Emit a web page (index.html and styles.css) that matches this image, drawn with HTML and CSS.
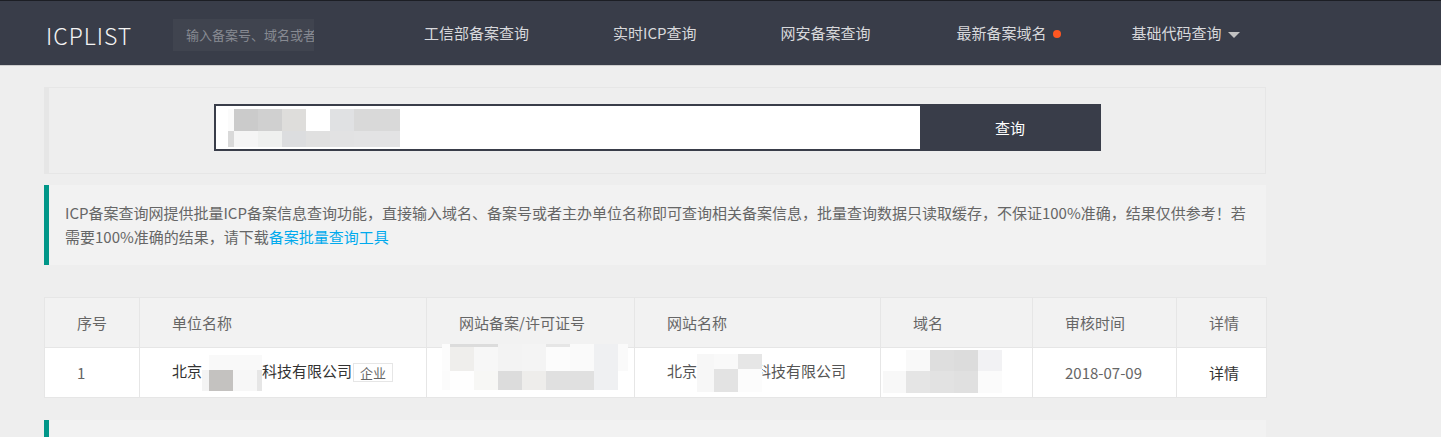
FILE: index.html
```html
<!DOCTYPE html>
<html lang="zh-CN">

<head>
    <meta charset="UTF-8">
    <meta name="viewport" content="width=device-width, initial-scale=1.0">
    <title>ICPLIST - ICP备案查询</title>
    <link rel="stylesheet" href="styles.css">
</head>

<body>
    <!-- Header -->
    <div class="header">
        <a class="logo" href="/">ICPLIST</a>
        <input class="header-search" type="text" placeholder="输入备案号、域名或者主办单位名称">
        <ul class="nav">
            <li class="nav-item"><a href="#">工信部备案查询</a></li>
            <li class="nav-item"><a href="#">实时ICP查询</a></li>
            <li class="nav-item"><a href="#">网安备案查询</a></li>
            <li class="nav-item"><a href="#">最新备案域名<span class="badge-dot"></span></a></li>
            <li class="nav-item"><a href="#">基础代码查询<span class="nav-more"></span></a></li>
        </ul>
    </div>

    <div class="container">
        <!-- Search -->
        <div class="search-panel">
            <form class="search-form" action="#" method="GET">
                <div class="search-field">
                    <svg class="mosaic" width="172" height="38" viewBox="0 0 172 38" shape-rendering="crispEdges">
                        <rect x="0" y="0" width="6" height="22" fill="#fbfbfb" />
                        <rect x="6" y="0" width="24" height="22" fill="#cbcbcb" />
                        <rect x="30" y="0" width="24" height="22" fill="#d0d0d0" />
                        <rect x="54" y="0" width="24" height="22" fill="#dedddb" />
                        <rect x="102" y="0" width="24" height="22" fill="#e0e1e3" />
                        <rect x="126" y="0" width="46" height="22" fill="#d9d9d9" />
                        <rect x="0" y="22" width="6" height="16" fill="#d9d9d9" />
                        <rect x="6" y="22" width="24" height="16" fill="#f5f5f5" />
                        <rect x="30" y="22" width="24" height="16" fill="#eff0ef" />
                        <rect x="54" y="22" width="24" height="16" fill="#dcdddf" />
                        <rect x="78" y="22" width="24" height="16" fill="#e0e0e0" />
                        <rect x="102" y="22" width="24" height="16" fill="#e2e2e3" />
                        <rect x="126" y="22" width="46" height="16" fill="#e3e3e4" />
                    </svg>
                </div>
                <button class="search-button" type="submit">查询</button>
            </form>
        </div>

        <!-- Notice -->
        <div class="quote">
            ICP备案查询网提供批量ICP备案信息查询功能，直接输入域名、备案号或者主办单位名称即可查询相关备案信息，批量查询数据只读取缓存，不保证100%准确，结果仅供参考！若<br>需要100%准确的结果，请下载<a href="#">备案批量查询工具</a>
        </div>

        <!-- Result table -->
        <table class="result-table">
            <colgroup>
                <col class="col-no">
                <col class="col-unit">
                <col class="col-license">
                <col class="col-site">
                <col class="col-domain">
                <col class="col-time">
                <col class="col-detail">
            </colgroup>
            <thead>
                <tr>
                    <th>序号</th>
                    <th>单位名称</th>
                    <th>网站备案/许可证号</th>
                    <th>网站名称</th>
                    <th>域名</th>
                    <th>审核时间</th>
                    <th>详情</th>
                </tr>
            </thead>
            <tbody>
                <tr>
                    <td>1</td>
                    <td class="unit-name">北京<svg class="mosaic" width="60" height="36" viewBox="0 0 60 36" shape-rendering="crispEdges">
                            <rect x="7" y="0" width="53" height="15" fill="#f9f9f9" />
                            <rect x="0" y="15" width="7" height="21" fill="#f4f4f4" />
                            <rect x="7" y="15" width="24" height="21" fill="#c4c2c0" />
                            <rect x="31" y="15" width="24" height="21" fill="#f7f7f7" />
                            <rect x="55" y="15" width="5" height="21" fill="#e6e6e6" />
                        </svg>科技有限公司<span class="tag">企业</span></td>
                    <td class="cell-cover">
                        <svg class="mosaic mosaic-license" width="186" height="46" viewBox="0 0 186 46" shape-rendering="crispEdges">
                            <rect x="0" y="0" width="8" height="27" fill="#fcfcfc" />
                            <rect x="8" y="0" width="24" height="27" fill="#efeeec" />
                            <rect x="32" y="0" width="24" height="27" fill="#f7f7f7" />
                            <rect x="56" y="0" width="24" height="27" fill="#f3f3f3" />
                            <rect x="80" y="0" width="24" height="27" fill="#f4f4f4" />
                            <rect x="104" y="0" width="24" height="27" fill="#fcfcfc" />
                            <rect x="128" y="0" width="24" height="27" fill="#fafafa" />
                            <rect x="152" y="0" width="24" height="27" fill="#eff0f2" />
                            <rect x="176" y="0" width="10" height="27" fill="#fafafa" />
                            <rect x="8" y="0" width="48" height="3" fill="#dcdcdc" />
                            <rect x="104" y="0" width="24" height="3" fill="#e6e6e6" />
                            <rect x="0" y="27" width="8" height="19" fill="#fbfbfb" />
                            <rect x="8" y="27" width="24" height="19" fill="#fefefe" />
                            <rect x="32" y="27" width="24" height="19" fill="#f7f7f5" />
                            <rect x="56" y="27" width="24" height="19" fill="#dcdcdc" />
                            <rect x="80" y="27" width="24" height="19" fill="#eeedeb" />
                            <rect x="104" y="27" width="48" height="19" fill="#e0e0e0" />
                            <rect x="152" y="27" width="24" height="19" fill="#eff0f2" />
                        </svg>
                    </td>
                    <td class="site-name">北京<svg class="mosaic mosaic-site" width="65" height="38" viewBox="0 0 65 38" shape-rendering="crispEdges">
                            <rect x="0" y="0" width="17" height="15" fill="#f7f7f7" />
                            <rect x="17" y="0" width="24" height="15" fill="#f9f9f9" />
                            <rect x="41" y="0" width="24" height="15" fill="#e6e6e6" />
                            <rect x="0" y="15" width="17" height="23" fill="#f7f7f7" />
                            <rect x="17" y="15" width="24" height="23" fill="#e3e3e3" />
                            <rect x="41" y="15" width="24" height="23" fill="#fcfcfc" />
                        </svg>科技有限公司</td>
                    <td class="cell-cover">
                        <svg class="mosaic mosaic-domain" width="119" height="43" viewBox="0 0 119 43" shape-rendering="crispEdges">
                            <rect x="23" y="0" width="24" height="21" fill="#f9f9f9" />
                            <rect x="47" y="0" width="24" height="21" fill="#dedede" />
                            <rect x="71" y="0" width="24" height="21" fill="#dcdcdc" />
                            <rect x="95" y="0" width="24" height="21" fill="#f2f2f4" />
                            <rect x="0" y="21" width="23" height="22" fill="#f8f8f8" />
                            <rect x="23" y="21" width="24" height="22" fill="#e5e5e5" />
                            <rect x="47" y="21" width="24" height="22" fill="#e2e2e2" />
                            <rect x="71" y="21" width="24" height="22" fill="#e0e0e0" />
                            <rect x="95" y="21" width="24" height="22" fill="#fbfbfb" />
                        </svg>
                    </td>
                    <td>2018-07-09</td>
                    <td><a class="detail-link" href="#">详情</a></td>
                </tr>
            </tbody>
        </table>

        <div class="quote quote-empty"></div>
    </div>
</body>

</html>
```

FILE: styles.css
```css
/* General Reset */
* {
    margin: 0;
    padding: 0;
    box-sizing: border-box;
}

body {
    font-family: "Noto Sans CJK SC", "Noto Sans", sans-serif;
    font-size: 15px;
    background-color: #eeeeee;
    color: #333;
    overflow: hidden;
}

a {
    text-decoration: none;
}

/* Header */
.header {
    display: flex;
    align-items: center;
    height: 66px;
    padding-left: 46px;
    background-color: #393d49;
    border-top: 1px solid #1c1e24;
    border-bottom: 1px solid #cdcdcd;
}

.logo {
    width: 127px;
    font-size: 23px;
    font-weight: 300;
    letter-spacing: 1px;
    color: #f4f4f4;
    padding-top: 3px;
}

.header-search {
    width: 141px;
    height: 32px;
    margin-top: 3px;
    padding-left: 13px;
    border: none;
    outline: none;
    background-color: #40444f;
    font-family: "Noto Sans CJK SC", sans-serif;
    font-size: 13px;
    color: #ccc;
}

.header-search::placeholder {
    color: #878a92;
}

.nav {
    display: flex;
    list-style: none;
    margin-left: 68px;
}

.nav-item a {
    position: relative;
    display: block;
    padding: 0 42px;
    line-height: 62px;
    color: #d8d9dc;
    font-size: 15px;
}

.nav-item:nth-child(4) a {
    padding: 0 43px 0 44px;
}

.badge-dot {
    position: absolute;
    top: 50%;
    width: 8px;
    height: 8px;
    margin: -3px 0 0 6px;
    border-radius: 50%;
    background-color: #ff5722;
}

.nav-more {
    position: absolute;
    top: 50%;
    width: 0;
    height: 0;
    margin: -1px 0 0 6px;
    border: 6px solid transparent;
    border-bottom-width: 0;
    border-top-color: #c2c2c2;
}

/* Main container */
.container {
    width: 1222px;
    margin: 21px 0 0 44px;
}

.search-panel {
    display: flex;
    justify-content: center;
    padding: 16px 0 22px;
    border: 1px solid #e6e6e6;
    border-left-width: 5px;
}

.search-form {
    display: flex;
}

.search-field {
    display: flex;
    align-items: center;
    width: 706px;
    height: 47px;
    padding-left: 12px;
    background-color: #fff;
    border: 2px solid #393d49;
    border-right: none;
}

.search-button {
    width: 181px;
    height: 47px;
    border: none;
    background-color: #393d49;
    color: #fff;
    font-family: "Noto Sans CJK SC", sans-serif;
    font-size: 15px;
    cursor: pointer;
}

.mosaic {
    display: inline-block;
    vertical-align: middle;
}

.search-field .mosaic {
    display: block;
}

/* Notice */
.quote {
    margin-top: 11px;
    padding: 16px 15px 16px 16px;
    border-left: 5px solid #009688;
    background-color: #f2f2f2;
    line-height: 24px;
    color: #666;
    white-space: nowrap;
}

.quote a {
    color: #01aaed;
}

.quote-empty {
    margin-top: 22px;
    height: 18px;
    padding: 0;
}

/* Result table */
.result-table {
    width: 1222px;
    margin-top: 32px;
    border-collapse: collapse;
    table-layout: fixed;
    background-color: #fff;
}

.col-no { width: 95px; }
.col-unit { width: 287px; }
.col-license { width: 208px; }
.col-site { width: 246px; }
.col-domain { width: 152px; }
.col-time { width: 144px; }
.col-detail { width: 90px; }

.result-table th,
.result-table td {
    height: 50px;
    padding: 0 0 0 32px;
    border: 1px solid #e6e6e6;
    text-align: left;
    font-weight: normal;
    color: #666;
    white-space: nowrap;
}

.result-table th {
    background-color: #f2f2f2;
}

.result-table .unit-name {
    color: #333;
}

.result-table .site-name {
    color: #555;
}

.mosaic-site {
    position: relative;
    margin-right: -6px;
}

.tag {
    display: inline-block;
    margin-left: 1px;
    padding: 0 6px;
    line-height: 17px;
    font-size: 13px;
    color: #666;
    border: 1px solid #e6e6e6;
    vertical-align: middle;
}

.cell-cover {
    position: relative;
}

.mosaic-license {
    position: absolute;
    left: 15px;
    top: -4px;
}

.mosaic-domain {
    position: absolute;
    left: 2px;
    top: 2px;
}

.detail-link {
    color: #333;
}
```
